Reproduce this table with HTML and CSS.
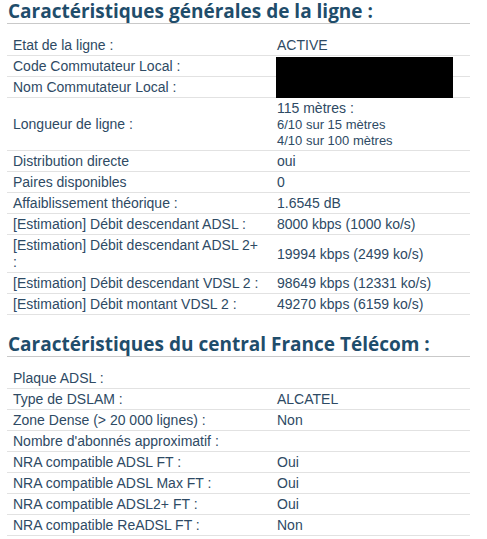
FILE: index.html
```html
<!DOCTYPE html>
<html lang="fr">
<head>
<meta charset="utf-8">
<title>Caractéristiques de la ligne</title>
<link rel="stylesheet" href="styles.css">
</head>
<body>
<div class="page">
  <h2 class="title">Caractéristiques générales de la ligne :</h2>
  <table class="info">
    <tr><td class="lbl">Etat de la ligne :</td><td class="val">ACTIVE</td></tr>
    <tr><td class="lbl">Code Commutateur Local :</td><td class="val redact-cell"><span class="redact"></span></td></tr>
    <tr><td class="lbl">Nom Commutateur Local :</td><td class="val"></td></tr>
    <tr class="tall"><td class="lbl">Longueur de ligne :</td><td class="val multi"><div class="l1">115 mètres :</div><div class="l2">6/10 sur 15 mètres</div><div class="l2">4/10 sur 100 mètres</div></td></tr>
    <tr><td class="lbl">Distribution directe</td><td class="val">oui</td></tr>
    <tr><td class="lbl">Paires disponibles</td><td class="val">0</td></tr>
    <tr><td class="lbl">Affaiblissement théorique :</td><td class="val">1.6545 dB</td></tr>
    <tr><td class="lbl">[Estimation] Débit descendant ADSL :</td><td class="val">8000 kbps (1000 ko/s)</td></tr>
    <tr><td class="lbl">[Estimation] Débit descendant ADSL 2+ :</td><td class="val">19994 kbps (2499 ko/s)</td></tr>
    <tr><td class="lbl">[Estimation] Débit descendant VDSL 2 :</td><td class="val">98649 kbps (12331 ko/s)</td></tr>
    <tr><td class="lbl">[Estimation] Débit montant VDSL 2 :</td><td class="val">49270 kbps (6159 ko/s)</td></tr>
  </table>

  <h2 class="title second">Caractéristiques du central France Télécom :</h2>
  <table class="info">
    <tr><td class="lbl">Plaque ADSL :</td><td class="val"></td></tr>
    <tr><td class="lbl">Type de DSLAM :</td><td class="val">ALCATEL</td></tr>
    <tr><td class="lbl">Zone Dense (&gt; 20 000 lignes) :</td><td class="val">Non</td></tr>
    <tr><td class="lbl">Nombre d'abonnés approximatif :</td><td class="val"></td></tr>
    <tr><td class="lbl">NRA compatible ADSL FT :</td><td class="val">Oui</td></tr>
    <tr><td class="lbl">NRA compatible ADSL Max FT :</td><td class="val">Oui</td></tr>
    <tr><td class="lbl">NRA compatible ADSL2+ FT :</td><td class="val">Oui</td></tr>
    <tr><td class="lbl">NRA compatible ReADSL FT :</td><td class="val">Non</td></tr>
  </table>
</div>
</body>
</html>
```

FILE: styles.css
```css
html, body {
  margin: 0;
  padding: 0;
  background: #ffffff;
}

.page {
  width: 463px;
  margin-left: 7px;
  font-family: "Liberation Sans", Arial, sans-serif;
  color: #2e4a64;
}

.title {
  margin: 0;
  padding: 0 0 0 1px;
  height: 23px;
  line-height: 22px;
  font-family: "Open Sans", "DejaVu Sans", sans-serif;
  font-weight: 700;
  font-size: 19px;
  color: #1f4d6b;
  border-bottom: 1px solid #c9c9c9;
  white-space: nowrap;
}

.title.second {
  margin-top: 18px;
}

.info {
  width: 463px;
  margin-top: 11px;
  border-collapse: collapse;
  table-layout: fixed;
  font-size: 14px;
}

.info td {
  border-bottom: 1px solid #e2e2e2;
  padding: 2px 6px 1px 6px;
  line-height: 17px;
  vertical-align: middle;
}

.info td.lbl {
  width: 247px;
  padding-right: 10px;
}

.info td.val {
  padding-left: 7px;
}

.redact-cell {
  position: relative;
}

.redact {
  position: absolute;
  left: 6px;
  top: 1px;
  width: 177px;
  height: 41px;
  background: #000000;
}

.multi .l1 {
  font-size: 14px;
  line-height: 17px;
}

.multi .l2 {
  font-size: 13px;
  line-height: 16px;
}
```
